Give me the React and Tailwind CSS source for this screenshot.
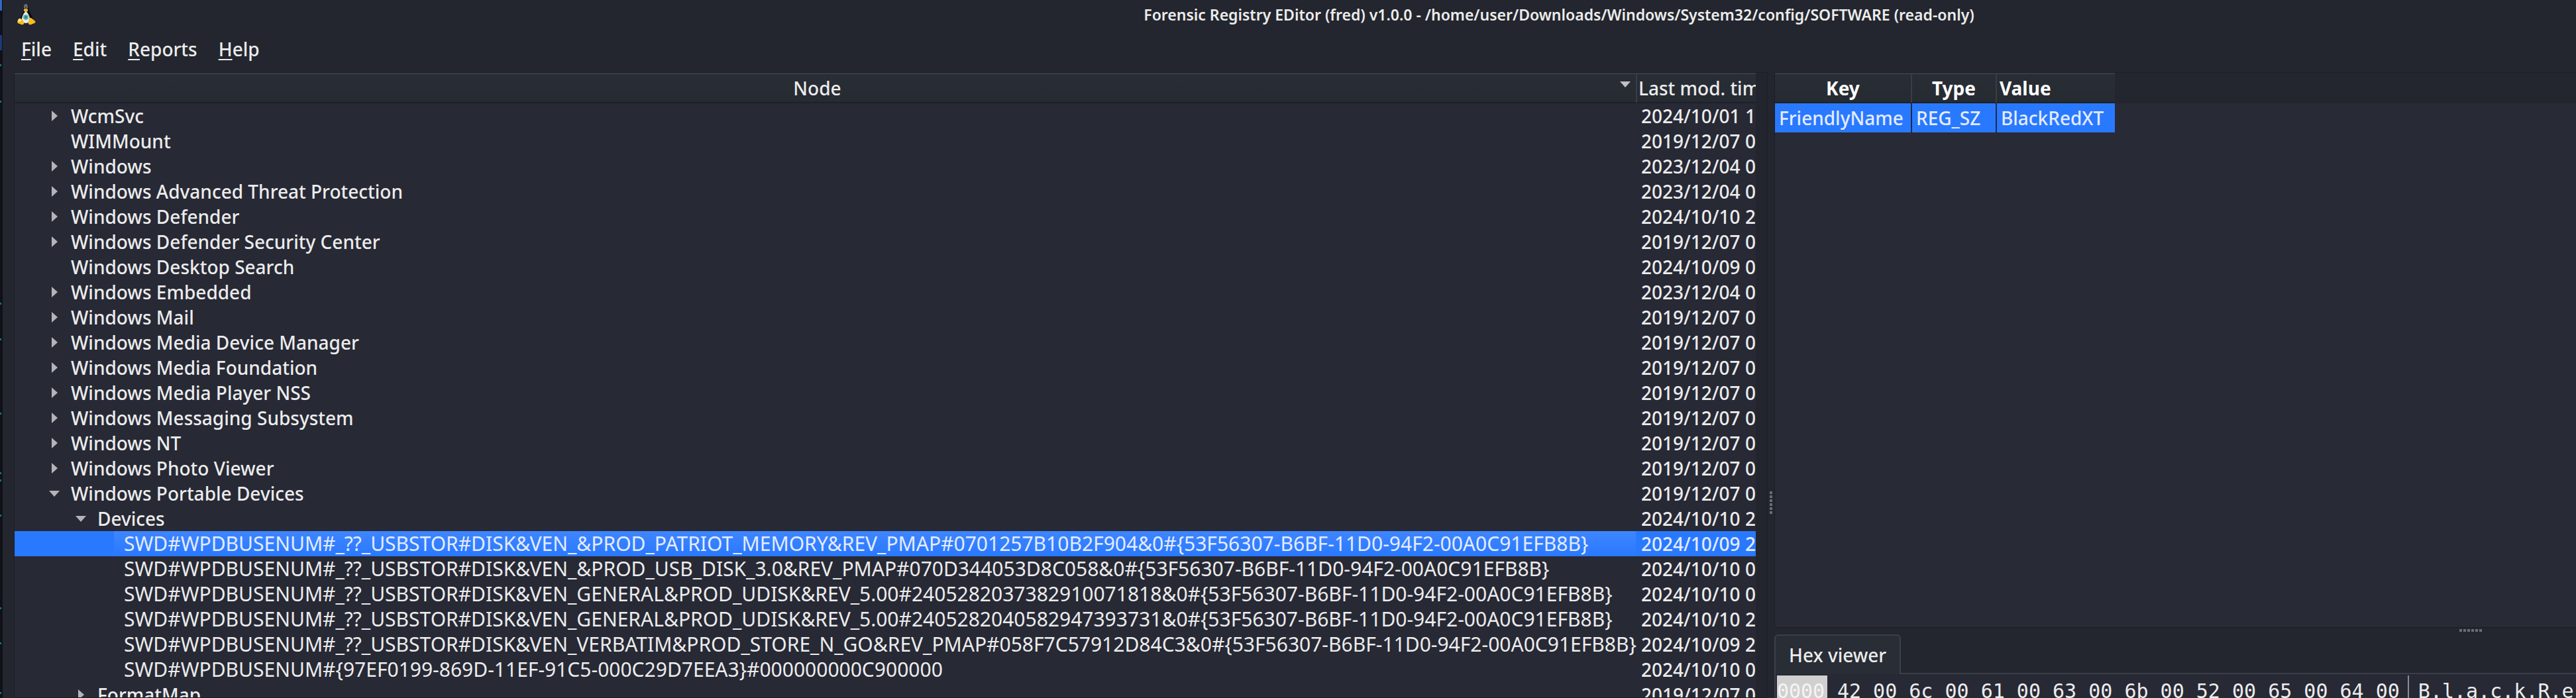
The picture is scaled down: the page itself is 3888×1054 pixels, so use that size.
const PORTABLE_GUID = "{53F56307-B6BF-11D0-94F2-00A0C91EFB8B}";

const NODES = [
  { name: "WcmSvc", level: 0, state: "closed", time: "2024/10/01 1" },
  { name: "WIMMount", level: 0, state: "leaf", time: "2019/12/07 0" },
  { name: "Windows", level: 0, state: "closed", time: "2023/12/04 0" },
  { name: "Windows Advanced Threat Protection", level: 0, state: "closed", time: "2023/12/04 0" },
  { name: "Windows Defender", level: 0, state: "closed", time: "2024/10/10 2" },
  { name: "Windows Defender Security Center", level: 0, state: "closed", time: "2019/12/07 0" },
  { name: "Windows Desktop Search", level: 0, state: "leaf", time: "2024/10/09 0" },
  { name: "Windows Embedded", level: 0, state: "closed", time: "2023/12/04 0" },
  { name: "Windows Mail", level: 0, state: "closed", time: "2019/12/07 0" },
  { name: "Windows Media Device Manager", level: 0, state: "closed", time: "2019/12/07 0" },
  { name: "Windows Media Foundation", level: 0, state: "closed", time: "2019/12/07 0" },
  { name: "Windows Media Player NSS", level: 0, state: "closed", time: "2019/12/07 0" },
  { name: "Windows Messaging Subsystem", level: 0, state: "closed", time: "2019/12/07 0" },
  { name: "Windows NT", level: 0, state: "closed", time: "2019/12/07 0" },
  { name: "Windows Photo Viewer", level: 0, state: "closed", time: "2019/12/07 0" },
  { name: "Windows Portable Devices", level: 0, state: "open", time: "2019/12/07 0" },
  { name: "Devices", level: 1, state: "open", time: "2024/10/10 2" },
  { name: "SWD#WPDBUSENUM#_??_USBSTOR#DISK&VEN_&PROD_PATRIOT_MEMORY&REV_PMAP#0701257B10B2F904&0#" + PORTABLE_GUID, level: 2, state: "leaf", time: "2024/10/09 2", selected: true },
  { name: "SWD#WPDBUSENUM#_??_USBSTOR#DISK&VEN_&PROD_USB_DISK_3.0&REV_PMAP#070D344053D8C058&0#" + PORTABLE_GUID, level: 2, state: "leaf", time: "2024/10/10 0" },
  { name: "SWD#WPDBUSENUM#_??_USBSTOR#DISK&VEN_GENERAL&PROD_UDISK&REV_5.00#2405282037382910071818&0#" + PORTABLE_GUID, level: 2, state: "leaf", time: "2024/10/10 0" },
  { name: "SWD#WPDBUSENUM#_??_USBSTOR#DISK&VEN_GENERAL&PROD_UDISK&REV_5.00#2405282040582947393731&0#" + PORTABLE_GUID, level: 2, state: "leaf", time: "2024/10/10 2" },
  { name: "SWD#WPDBUSENUM#_??_USBSTOR#DISK&VEN_VERBATIM&PROD_STORE_N_GO&REV_PMAP#058F7C57912D84C3&0#" + PORTABLE_GUID, level: 2, state: "leaf", time: "2024/10/09 2" },
  { name: "SWD#WPDBUSENUM#{97EF0199-869D-11EF-91C5-000C29D7EEA3}#000000000C900000", level: 2, state: "leaf", time: "2024/10/10 0" },
  { name: "FormatMap", level: 1, state: "closed", time: "2019/12/07 0" },
];

const INDENT = ["w-[50px]", "w-[90px]", "w-[130px]"];
const MENUS = ["File", "Edit", "Reports", "Help"];
const HEAD = "h-[46px] border-t-2 border-b-2 border-t-[#393d45] border-b-[#1d2028] bg-linear-to-b from-[#292d35] to-[#262b32] p-0";
const VALUE_CELL = "h-11 bg-[#2979ff] p-0 pl-1.5 text-left text-[#e3ebff]";

function EdgeMarks() {
  const dots = [98, 153, 458, 512, 624, 714, 725, 778, 918, 971, 1046];
  return (
    <svg className="h-full w-1 shrink-0 bg-[#0f1117]" aria-hidden="true">
      <rect width="3" height="16" fill="#3566c4" />
      <rect y="53" width="3" height="23" fill="#1c3a78" />
      {dots.map((y) => (
        <rect key={y} y={y - 1} width="2" height="3" fill="#147a6c" />
      ))}
    </svg>
  );
}

function AppIcon() {
  return (
    <svg viewBox="0 0 28 32" className="h-8 w-7 shrink-0" aria-hidden="true">
      <path d="M13 1c3 0 4 2 4 5 0 4 3 8 5 12 2 3 2 7 1 9H6C4 24 5 20 7 17c2-3 3-7 3-11 0-3 1-5 3-5z" fill="#0b0c0e" />
      <path d="M13 0c2 0 3 2 3 5l-1 3h-4l-1-3c0-3 1-5 3-5z" fill="#6d6f73" />
      <path d="M13 3l1 4h-2z" fill="#26282c" />
      <path d="M10 8l3-1 3 1v3l-3 1-3-1z" fill="#f0b428" />
      <path d="M13 11c3 2 6 8 6 12 0 3-2 6-6 6s-6-3-6-6c0-4 3-10 6-12z" fill="#e8ecec" />
      <ellipse cx="13" cy="20" rx="4" ry="4" fill="#5fb3b3" />
      <ellipse cx="13" cy="20" rx="2" ry="2" fill="#2a8288" />
      <path d="M3 22c3-1 5 2 7 5 1 3-1 5-4 4l-5-2c-2-2 0-5 2-7z" fill="#f5bd22" />
      <path d="M20 21c2 0 3 2 6 4 2 1 2 3 0 4l-5 2c-3 1-5-1-4-4 0-3 1-6 3-6z" fill="#f5bd22" />
      <path d="M2 23c2-1 4 0 4 2l-3 2c-2-1-2-3-1-4z" fill="#fff0a0" />
    </svg>
  );
}

function Toggle({ state, name }) {
  if (state === "leaf") return <span className="w-5 shrink-0" />;
  return (
    <button type="button" aria-label={name} aria-expanded={state === "open"} className="flex h-5 w-5 shrink-0 items-center justify-center">
      {state === "open" ? (
        <svg className="h-[9px] w-4" viewBox="0 0 16 9"><path d="M0 0h16L8 9z" fill="#b4b4b8" /></svg>
      ) : (
        <svg className="h-4 w-[9px]" viewBox="0 0 9 16"><path d="M0 0v16l9-8z" fill="#b4b4b8" /></svg>
      )}
    </button>
  );
}

function Grip({ vertical }) {
  return (
    <div className={vertical ? "flex flex-col items-center gap-0.5" : "flex gap-0.5"}>
      {[0, 1, 2, 3, 4, 5].map((i) => (
        <span key={i} className="h-1 w-1 bg-[#6b6d74]" />
      ))}
    </div>
  );
}

function NodeTree() {
  return (
    <section className="flex min-w-0 flex-[2647] border border-[#1b1e26] bg-[#272935]">
      <div className="min-w-0 flex-1 overflow-hidden">
        <table className="w-full table-fixed border-separate border-spacing-0 whitespace-nowrap">
          <colgroup>
            <col />
            <col className="w-[181px]" />
          </colgroup>
          <thead>
            <tr>
              <th className={HEAD + " font-medium"}>
                <div className="flex items-start pr-2">
                  <span className="flex-1 text-center">Node</span>
                  <svg className="mt-2 h-[9px] w-4" viewBox="0 0 16 9" aria-hidden="true"><path d="M0 0h16L8 9z" fill="#c0c0c4" /></svg>
                </div>
              </th>
              <th className={HEAD + " border-l-2 border-l-[#393d45] pl-0.5 text-left font-medium"}>
                <div className="overflow-hidden">Last mod. time</div>
              </th>
            </tr>
          </thead>
          <tbody>
            {NODES.map((n) => (
              <tr key={n.name} className={n.selected ? "bg-[#2979ff] text-[#e3ebff]" : ""}>
                <td className="h-[38px] p-0">
                  <div className="flex h-[38px] items-center">
                    <span className={INDENT[n.level] + " shrink-0"} />
                    <Toggle state={n.state} name={n.name} />
                    <span
                      className={
                        "flex h-[38px] flex-1 items-center pl-[15px]" +
                        (n.level === 2 ? " text-[30px] font-normal" : "") +
                        (n.selected ? " bg-linear-to-b from-[#3f86ff] to-[#2878ff]" : "")
                      }
                    >
                      {n.name}
                    </span>
                  </div>
                </td>
                <td className="h-[38px] p-0 pl-2">
                  <div className="overflow-hidden">{n.time}</div>
                </td>
              </tr>
            ))}
          </tbody>
        </table>
      </div>
      <div className="w-[17px] shrink-0 bg-[#22252d]" />
    </section>
  );
}

function ValueTable() {
  return (
    <section className="h-[839px] shrink-0 overflow-hidden border border-r-0 border-[#1b1e26] bg-[#282a35]">
      <div className="flex h-[46px] bg-[#23262e]">
        <table className="h-[90px] table-fixed border-separate border-spacing-0 whitespace-nowrap">
          <colgroup>
            <col className="w-[207px]" />
            <col className="w-[128px]" />
            <col className="w-[178px]" />
          </colgroup>
          <thead>
            <tr className="font-bold text-white">
              <th className={HEAD + " border-r-2 border-r-[#393d45] text-center"}>Key</th>
              <th className={HEAD + " border-r-2 border-r-[#393d45] text-center"}>Type</th>
              <th className={HEAD + " pl-1 text-left"}>Value</th>
            </tr>
          </thead>
          <tbody>
            <tr>
              <td className={VALUE_CELL + " border-r-2 border-r-[#1d2a4c]"}>FriendlyName</td>
              <td className={VALUE_CELL + " border-r-2 border-r-[#1d2a4c]"}>REG_SZ</td>
              <td className={VALUE_CELL}>BlackRedXT</td>
            </tr>
          </tbody>
        </table>
      </div>
    </section>
  );
}

function HexViewer() {
  return (
    <section className="flex min-h-0 flex-1 flex-col overflow-hidden">
      <div className="flex shrink-0" role="tablist">
        <button type="button" role="tab" aria-selected="true" className="h-[60px] rounded-t-md border-2 border-b-0 border-[#3b3f47] bg-[#292d35] px-5 font-medium">
          Hex viewer
        </button>
        <div className="flex-1 border-b-2 border-[#3b3f47]" />
      </div>
      <div className="flex flex-1 overflow-hidden border-l-2 border-[#3b3f47] bg-[#272935] pt-0.5 pl-0.5 font-['DejaVu_Sans_Mono',monospace] text-[30px] leading-[48px] font-normal whitespace-pre">
        <div className="w-[76px] shrink-0 bg-[#d0d0d0] text-[#f4f4f4]">0000</div>
        <div className="shrink-0 border-r-2 border-[#8c8c92] pr-3 pl-[15px]">42 00 6c 00 61 00 63 00 6b 00 52 00 65 00 64 00</div>
        <div className="pl-3.5">B.l.a.c.k.R.e</div>
      </div>
    </section>
  );
}

export default function App() {
  return (
    <div className="flex h-screen overflow-hidden bg-[#0f1117] font-['Noto_Sans',sans-serif] text-[28px] leading-9 font-medium text-[#ececec]">
      <EdgeMarks />
      <main className="flex min-w-0 flex-1 flex-col bg-[#23262e]">
        <header className="flex h-11 shrink-0 items-center pl-[22px]">
          <AppIcon />
          <h1 className="flex-1 pl-[764px] text-center text-[23px] font-semibold">
            Forensic Registry EDitor (fred) v1.0.0 - /home/user/Downloads/Windows/System32/config/SOFTWARE (read-only)
          </h1>
        </header>
        <nav className="flex h-[65px] shrink-0 items-start gap-8 pt-3 pl-7">
          {MENUS.map((m) => (
            <button key={m} type="button">
              <span className="underline decoration-2 underline-offset-4">{m[0]}</span>
              {m.slice(1)}
            </button>
          ))}
        </nav>
        <div className="flex min-h-0 flex-1 overflow-hidden pl-[17px]">
          <NodeTree />
          <div className="w-2.5 shrink-0 pt-[633px]">
            <Grip vertical />
          </div>
          <div className="flex min-w-0 flex-[1211] flex-col">
            <ValueTable />
            <div className="h-2.5 shrink-0 pt-0.5 pl-[1034px]">
              <Grip />
            </div>
            <HexViewer />
          </div>
        </div>
      </main>
    </div>
  );
}
